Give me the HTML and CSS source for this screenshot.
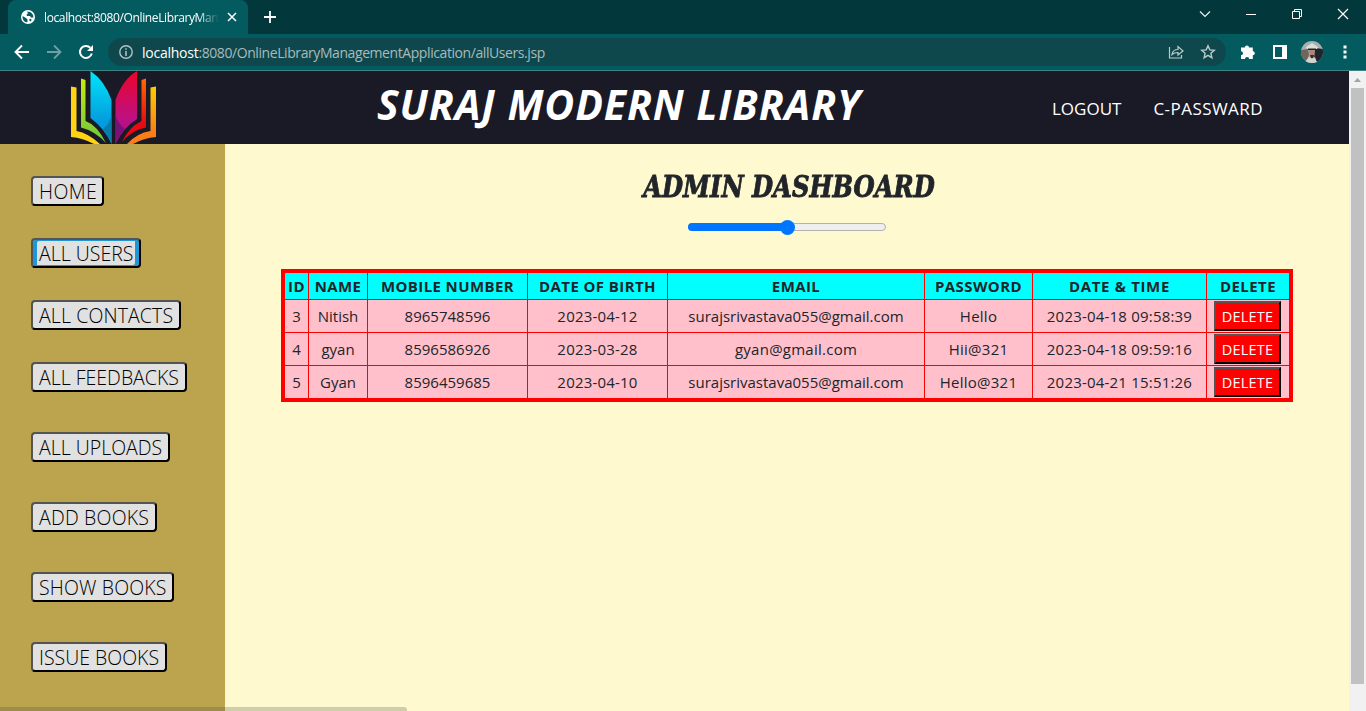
FILE: index.html
```html
<!DOCTYPE html>
<html lang="en">
<head>
<meta charset="utf-8">
<title>Admin Dashboard</title>
<link rel="stylesheet" href="styles.css">
</head>
<body>
<div class="browser">
  <div class="tabstrip">
    <div class="tab">
      <svg class="globe" width="14" height="14" viewBox="0 0 14 14"><circle cx="7" cy="7" r="7" fill="#fff"/><path d="M1.500 6 5 8l1.500 1.500V12L5 12.300C3 11.500 1.300 9.500 1.500 6ZM6 1.500 7 3.500 5.500 4.500 6 6h3l1 1.500h2.400C12.500 4.500 10.500 1.500 6 1.500ZM9 8.500 10.800 10 9.500 11.600 8 10Z" fill="#065a60"/></svg>
      <span class="tab-title">localhost:8080/OnlineLibraryMan</span>
      <svg class="tab-close" width="10" height="10" viewBox="0 0 10 10"><path d="m1 1 8 8M9 1 1 9" stroke="#fff" stroke-width="1.500"/></svg>
    </div>
    <svg class="new-tab" width="12" height="12" viewBox="0 0 12 12"><path d="M6 0v12M0 6h12" stroke="#fff" stroke-width="1.800"/></svg>
    <div class="window-controls">
      <svg width="12" height="12" viewBox="0 0 12 12"><path d="m1 3.500 5 5 5-5" fill="none" stroke="#e8efef" stroke-width="1.200"/></svg>
      <svg width="12" height="12" viewBox="0 0 12 12"><path d="M1 6.500h10" stroke="#fff"/></svg>
      <svg width="12" height="12" viewBox="0 0 12 12"><path d="M1.500 3.500h7v7h-7zM3.500 3V1.500h7v7H9" fill="none" stroke="#fff"/></svg>
      <svg width="12" height="12" viewBox="0 0 12 12"><path d="m1 1 10 10M11 1 1 11" stroke="#fff" stroke-width="1.200"/></svg>
    </div>
  </div>
  <div class="toolbar">
    <svg class="nav-icon" width="16" height="16" viewBox="0 0 16 16"><path d="M15 8H2M8 1.500 1.500 8 8 14.500" fill="none" stroke="#fff" stroke-width="1.900"/></svg>
    <svg class="nav-icon" width="16" height="16" viewBox="0 0 16 16"><path d="M1 8h13M8 1.500 14.500 8 8 14.500" fill="none" stroke="#6fa0a4" stroke-width="1.800"/></svg>
    <svg class="nav-icon" width="16" height="16" viewBox="0 0 16 16"><path d="M13.800 9.500A6 6 0 1 1 12.300 3.700" fill="none" stroke="#fff" stroke-width="2"/><path d="M15 1v6H9z" fill="#fff"/></svg>
    <div class="address">
      <svg class="info" width="14" height="14" viewBox="0 0 14 14"><circle cx="7" cy="7" r="6.200" fill="none" stroke="#b4c3c5" stroke-width="1.400"/><path d="M7 6v5M7 3.200v1.600" stroke="#b4c3c5" stroke-width="1.500"/></svg>
      <span class="url"><b>localhost</b>:8080/OnlineLibraryManagementApplication/allUsers.jsp</span>
      <svg class="share" width="16" height="14" viewBox="0 0 16 14"><path d="M1.500 2v11h12v-3M4 9.500C4.500 6 6.500 4.500 10 4.500V1.500L15 6l-5 4V7.500C7 7.500 5.500 8 4 9.500Z" fill="none" stroke="#bccacb" stroke-width="1.200"/></svg>
      <svg class="star" width="16" height="16" viewBox="0 0 16 16"><path d="m8 1.800 1.800 4.100 4.500.4-3.400 3 1 4.400L8 11.400l-3.900 2.300 1-4.400-3.400-3 4.500-.4z" fill="none" stroke="#bccacb" stroke-width="1.400"/></svg>
    </div>
    <svg class="puzzle" width="16" height="16" viewBox="0 0 16 16"><path d="M1 3.500h3.800a2.100 2.100 0 1 1 4.200 0h3.800v3.700a2 2 0 1 1 0 4V15H9.200a2.100 2.100 0 0 0-4.200 0H1v-3.800a2 2 0 0 0 0-4z" fill="#fff"/></svg>
    <svg class="panel-icon" width="14" height="14" viewBox="0 0 14 14"><path d="M1 1h12v12H1z" fill="none" stroke="#fff" stroke-width="2"/><path d="M9 0h5v14H9z" fill="#fff"/></svg>
    <svg class="avatar" width="22" height="22" viewBox="0 0 22 22"><clipPath id="face"><circle cx="11" cy="11" r="11"/></clipPath><g clip-path="url(#face)"><path d="M0 0h22v22H0z" fill="#a9b0ae"/><path d="M0 9 7 8l1 6-3 8H0z" fill="#6f665c"/><path d="M14 7l8 1v9l-5 5-4-5z" fill="#20242c"/><path d="M5 6 11 2l6 4-1 2H6z" fill="#d9dfdf"/><path d="M7 7.500h8V9H7z" fill="#252629"/><path d="M8 9h6l-1 7-2 1-2-1z" fill="#b28772"/><path d="m3 22 5-6 3 2 3-2 2 6z" fill="#d5d3cf"/><path d="M9 14h4l-1 3h-2z" fill="#35272a"/></g></svg>
    <svg class="more" width="4" height="14" viewBox="0 0 4 14"><path d="M.5.500h3v3h-3zM.5 5.500h3v3h-3zM.5 10.500h3v3h-3z" fill="#fff"/></svg>
  </div>
</div>
<div class="viewport">
  <div class="page">
    <header class="site-header">
      <svg class="logo" width="86" height="73" viewBox="0 0 86 73">
        <defs>
          <linearGradient id="cyan" x1="0" y1="0" x2="0" y2="1"><stop offset="0" stop-color="#00e6fa"/><stop offset=".7" stop-color="#049bdc"/></linearGradient>
          <linearGradient id="rose" x1="0" y1="0" x2="0" y2="1"><stop offset="0" stop-color="#ec0528"/><stop offset=".65" stop-color="#bd1083"/><stop offset="1" stop-color="#a8108a"/></linearGradient>
          <linearGradient id="lime" x1="0" y1="0" x2="0" y2="1"><stop offset="0" stop-color="#c8ea10"/><stop offset="1" stop-color="#6cc739"/></linearGradient>
          <linearGradient id="gold" x1="0" y1="0" x2="0" y2="1"><stop offset="0" stop-color="#fccb05"/><stop offset=".8" stop-color="#fb7d17"/></linearGradient>
          <linearGradient id="flame" x1="0" y1="0" x2="0" y2="1"><stop offset="0" stop-color="#ff6900"/><stop offset=".7" stop-color="#e60b13"/></linearGradient>
        </defs>
        <path d="M0 15.500 5.500 16.500V60Q17 62 29 73H23Q12 67 0 66z" fill="#ffd313"/>
        <path d="M10 7.500 14.500 9V50Q26 54 35 72 24 60 10 56.500z" fill="url(#lime)"/>
        <path d="M19.500 0Q34 10 40.500 29V73Q34 58 19.500 47z" fill="url(#cyan)"/>
        <path d="M40.500 44V73Q37 64 32 58 39 53 40.500 44z" fill="#087da9"/>
        <path d="M66 0Q52 8 44.500 29V73Q52 57 66 48z" fill="url(#rose)"/>
        <path d="M44.500 44V73Q48 64 54 58 47 53 44.500 44z" fill="#79117b"/>
        <path d="M75 7.500 70.500 9V50Q58 56 51 71 61 59 75 56.500z" fill="url(#flame)"/>
        <path d="M85 15.500 79.500 16.500V60Q66 62 56 73H62Q73 67 85 66z" fill="url(#gold)"/>
      </svg>
      <h1 class="brand">SURAJ MODERN LIBRARY</h1>
      <nav class="account"><a class="logout">LOGOUT</a><a class="change-password">C-PASSWARD</a></nav>
    </header>
    <div class="body">
      <aside class="sidebar">
        <button class="menu-button home">HOME</button>
        <button class="menu-button users active">ALL USERS</button>
        <button class="menu-button contacts">ALL CONTACTS</button>
        <button class="menu-button feedbacks">ALL FEEDBACKS</button>
        <button class="menu-button uploads spaced">ALL UPLOADS</button>
        <button class="menu-button add spaced">ADD BOOKS</button>
        <button class="menu-button show spaced">SHOW BOOKS</button>
        <button class="menu-button issue spaced">ISSUE BOOKS</button>
      </aside>
      <main class="content">
        <h2 class="heading">ADMIN DASHBOARD</h2>
        <div class="slider"><div class="slider-fill"></div><div class="slider-thumb"></div></div>
        <table class="users-table">
          <colgroup><col class="c-id"><col class="c-name"><col class="c-mobile"><col class="c-birth"><col class="c-email"><col class="c-pass"><col class="c-time"><col class="c-del"></colgroup>
          <thead><tr><th>ID</th><th>NAME</th><th>MOBILE NUMBER</th><th>DATE OF BIRTH</th><th>EMAIL</th><th>PASSWORD</th><th class="time-head">DATE &amp; TIME</th><th>DELETE</th></tr></thead>
          <tbody>
            <tr><td>3</td><td>Nitish</td><td>8965748596</td><td class="date">2023-04-12</td><td>surajsrivastava055@gmail.com</td><td class="pass">Hello</td><td class="date">2023-04-18 09:58:39</td><td><button class="delete">DELETE</button></td></tr>
            <tr><td>4</td><td>gyan</td><td>8596586926</td><td class="date">2023-03-28</td><td class="short-mail">gyan@gmail.com</td><td class="pass">Hii@321</td><td class="date">2023-04-18 09:59:16</td><td><button class="delete">DELETE</button></td></tr>
            <tr><td>5</td><td>Gyan</td><td>8596459685</td><td class="date">2023-04-10</td><td>surajsrivastava055@gmail.com</td><td class="pass">Hello@321</td><td class="date">2023-04-21 15:51:26</td><td><button class="delete">DELETE</button></td></tr>
          </tbody>
        </table>
      </main>
    </div>
    <div class="status-bar"></div>
  </div>
  <div class="scrollbar"><svg width="17" height="17" viewBox="0 0 17 17"><path d="m5 11 3.500-4 3.500 4z" fill="#a3a3a3"/></svg><div class="scroll-thumb"></div></div>
</div>
</body>
</html>
```

FILE: styles.css
```css
* { box-sizing: border-box; }
body { margin: 0; height: 711px; overflow: hidden; display: flex; flex-direction: column; font-family: "Open Sans", "Noto Sans", sans-serif; color: #212529; }
svg { display: block; flex: none; }

.browser { height: 71px; background: #035b60; border-bottom: 1px solid #408184; }
.tabstrip { height: 34px; background: #02383c; display: flex; align-items: center; }
.tab { width: 240px; height: 34px; margin-left: 8px; padding-left: 13px; background: #035b60; border-radius: 8px 8px 0 0; display: flex; align-items: center; }
.tab-title { width: 175px; margin-left: 9px; white-space: nowrap; font-size: 12px; letter-spacing: -.38px; color: #fff; mask-image: linear-gradient(90deg, #000 88%, transparent); }
.tab-close { margin-left: 8px; }
.new-tab { margin-left: 16px; }
.window-controls { margin-left: auto; margin-right: 17px; margin-bottom: 6px; display: flex; gap: 34px; }
.toolbar { height: 36px; display: flex; align-items: center; padding: 0 19px 0 14px; }
.nav-icon { margin-right: 16px; }
.address { width: 1118px; height: 28px; margin-left: -2px; border-radius: 14px; background: #0e484c; display: flex; align-items: center; padding: 0 10px 0 11px; }
.url { margin: 0 0 0 9px; font-size: 14px; letter-spacing: -.42px; color: #a8babc; white-space: nowrap; }
.url b { font-weight: 400; letter-spacing: -.25px; color: #fff; }
.share { margin-left: auto; }
.star { margin-left: 16px; }
.puzzle { margin-left: 14px; }
.panel-icon { margin-left: 17px; }
.avatar { margin-left: 14px; }
.more { margin-left: auto; }

.viewport { flex: 1; display: flex; }
.page { width: 1349px; position: relative; display: flex; flex-direction: column; }
.site-header { height: 73px; background: #1a1926; color: #fff; display: flex; align-items: center; }
.logo { margin-left: 71px; }
.brand { margin: 0 0 8px 220px; width: 675px; font-size: 41px; letter-spacing: .9px; font-style: italic; font-weight: 700; white-space: nowrap; }
.account { display: flex; gap: 32px; margin-top: 1px; font-size: 17px; white-space: nowrap; }
.change-password { letter-spacing: .45px; }
.body { flex: 1; display: flex; }
.sidebar { width: 225px; background: #bca34d; padding: 32px 0 0 31px; display: flex; flex-direction: column; align-items: flex-start; }
.menu-button { height: 30px; margin: 0 0 32px; padding: 2px 0 0 6px; border: 2px outset #000; border-radius: 4px; background: #e1e1e1; color: #000; font: 300 19.500px/24px "Open Sans", sans-serif; text-align: left; white-space: nowrap; }
.spaced { margin-top: 8px; }
.home { width: 73px; letter-spacing: .4px; }
.users { width: 110px; }
.contacts { width: 150px; letter-spacing: .12px; }
.feedbacks { width: 156px; }
.uploads { width: 139px; }
.add { width: 126px; letter-spacing: .2px; }
.show { width: 143px; letter-spacing: .15px; }
.issue { width: 136px; }
.active { box-shadow: inset 4px 1px #2196d6, inset -4px -1px #2196d6; }

.content { flex: 1; background: #fff9d0; display: flex; flex-direction: column; align-items: center; }
.heading { margin: 24px 0 0 4px; height: 38px; font: italic 700 30px/38px "DejaVu Serif Condensed", "DejaVu Serif", serif; font-stretch: condensed; white-space: nowrap; transform: scaleX(.9); -webkit-text-stroke: .8px #212529; }
.slider { width: 198px; height: 8px; margin-top: 17px; border: 1px solid #b2b2ae; border-radius: 4px; background: #efefef; display: flex; align-items: center; }
.slider-fill { width: 94px; height: 8px; margin-left: -1px; border-radius: 4px 0 0 4px; background: #0075ff; }
.slider-thumb { width: 15px; height: 15px; flex: none; border-radius: 50%; background: #0075ff; margin-left: -2.500px; }
.users-table { width: 1012px; margin-top: 38px; table-layout: fixed; border: 4px solid #f00; border-collapse: separate; border-spacing: 0; font-size: 15px; text-align: center; }
.users-table th, .users-table td { padding: 0; border: 0 solid #f00; border-width: 0 1px 1px 0; white-space: nowrap; }
.users-table th { background: #0ff; line-height: 26px; letter-spacing: .4px; }
.users-table .time-head { letter-spacing: .65px; }
.users-table td { height: 33px; background: #ffc0cb; line-height: 30px; font-weight: 400; }
.users-table th:last-child, .users-table td:last-child { border-right: 0; }
.users-table tr:last-child td { height: 32px; border-bottom: 0; }
.c-id { width: 24px; } .c-name { width: 59px; } .c-mobile { width: 160px; } .c-birth { width: 140px; }
.c-email { width: 257px; } .c-pass { width: 108px; } .c-time { width: 174px; } .c-del { width: 82px; }
.users-table thead tr th { height: 27px; border-bottom: 1px solid #f00; }
.users-table .date { letter-spacing: .2px; }
.users-table .short-mail { letter-spacing: .25px; }
.users-table .pass { letter-spacing: .25px; }
.delete { display: block; width: 67px; height: 30px; margin: 0 0 0 7px; padding: 1px 0 0; border: 2px outset #000; background: #f00; color: #fff; font: 14.500px/24px "Open Sans", sans-serif; letter-spacing: .2px; }

.status-bar { position: absolute; left: 0; bottom: 0; width: 407px; height: 4px; background: rgba(58, 79, 61, .25); border-radius: 0 3px 0 0; }
.scrollbar { width: 17px; background: #f1f1f1; display: flex; flex-direction: column; align-items: center; }
.scroll-thumb { width: 13px; height: 596px; background: #c1c1c1; }
```
